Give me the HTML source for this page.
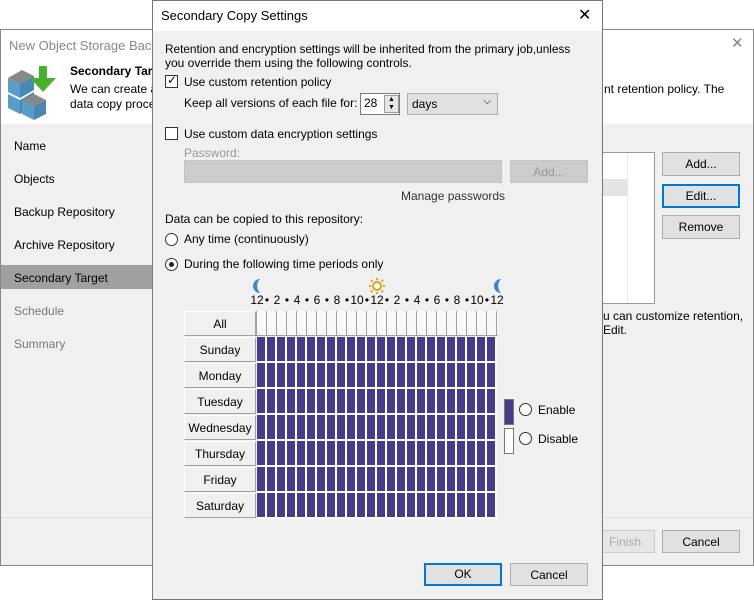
<!DOCTYPE html>
<html><head><meta charset="utf-8"><style>
*{box-sizing:border-box;margin:0;padding:0}
body{width:754px;height:600px;background:#fff;position:relative;overflow:hidden;font-family:"Liberation Sans",sans-serif;font-size:12px;color:#000}
.a{position:absolute;white-space:nowrap}
.btn{position:absolute;background:#e1e1e1;border:1px solid #adadad;text-align:center;line-height:22px}
.cb{position:absolute;width:13px;height:13px;border:1px solid #333;background:#fff}
.rb{position:absolute;width:13px;height:13px;border:1px solid #333;border-radius:50%;background:#fff}
.day{position:absolute;left:184px;width:72px;height:25px;background:#f0f0f0;border-right:1px solid #a0a0a0;border-bottom:1px solid #a0a0a0;border-top:1px solid #fff;border-left:1px solid #fff;text-align:center;line-height:24px}
.nav{position:absolute;left:14px}
.h{position:absolute;top:293px;width:20px;text-align:center;margin-left:-10px}
</style></head><body>
<div class="a" style="left:0;top:29px;width:754px;height:537px;border:1px solid #888;background:#f0f0f0"></div>
<div class="a" style="left:1px;top:30px;width:752px;height:94px;background:#fff"></div>
<div class="a" style="left:9px;top:38px;color:#888;font-size:13px">New Object Storage Backup</div>
<div class="a" style="left:731px;top:34px;color:#888;font-size:15px">✕</div>
<svg class="a" style="left:6px;top:64px" width="56" height="56" viewBox="0 0 56 56">
<polygon points="2,14 16,6 28,12 14,20" fill="#888"/><polygon points="2,14 14,20 14,34 2,28" fill="#5a9cc8"/><polygon points="14,20 28,12 28,26 14,34" fill="#4a88b4"/>
<polygon points="2,30 14,36 14,50 2,44" fill="#5a9cc8"/><polygon points="14,36 28,28 28,42 14,50" fill="#4a88b4"/>
<polygon points="16,36 28,30 40,36 28,42" fill="#888"/><polygon points="28,42 40,36 40,50 28,56" fill="#4a88b4"/><polygon points="16,36 28,42 28,56 16,50" fill="#5a9cc8"/>
<polygon points="33,2 41,2 41,14 50,14 37,28 24,14 33,14" fill="#4caf2c"/></svg>
<div class="a" style="left:70px;top:64px;font-weight:bold;font-size:12px">Secondary Target</div>
<div class="a" style="left:70px;top:82px">We can create a</div>
<div class="a" style="left:70px;top:97px">data copy proce</div>
<div class="a" style="left:604px;top:82px">nt retention policy. The</div>
<div class="a" style="left:1px;top:265px;width:152px;height:24px;background:#a0a0a0"></div>
<div class="nav a" style="top:139px">Name</div>
<div class="nav a" style="top:172px">Objects</div>
<div class="nav a" style="top:205px">Backup Repository</div>
<div class="nav a" style="top:238px">Archive Repository</div>
<div class="nav a" style="top:271px">Secondary Target</div>
<div class="nav a" style="top:304px;color:#777">Schedule</div>
<div class="nav a" style="top:337px;color:#777">Summary</div>
<div class="a" style="left:602px;top:152px;width:53px;height:152px;background:#fff;border:1px solid #999"></div>
<div class="a" style="left:603px;top:179px;width:24px;height:17px;background:#e4e4e4"></div>
<div class="a" style="left:627px;top:153px;width:1px;height:150px;background:#e8e8e8"></div>
<div class="btn" style="left:662px;top:152px;width:78px;height:24px">Add...</div>
<div class="btn" style="left:662px;top:184px;width:78px;height:24px;border:2px solid #0078d7;line-height:20px">Edit...</div>
<div class="btn" style="left:662px;top:215px;width:78px;height:24px">Remove</div>
<div class="a" style="left:603px;top:309px">u can customize retention,</div>
<div class="a" style="left:603px;top:323px">Edit.</div>
<div class="a" style="left:1px;top:517px;width:752px;height:1px;background:#ddd"></div>
<div class="btn" style="left:595px;top:530px;width:60px;height:23px;color:#aaa;background:#e6e6e6;border-color:#ccc">Finish</div>
<div class="btn" style="left:662px;top:530px;width:78px;height:23px">Cancel</div>

<div class="a" style="left:152px;top:0;width:451px;height:600px;border:1px solid #777;background:#f0f0f0"></div>
<div class="a" style="left:153px;top:1px;width:449px;height:30px;background:#fff"></div>
<div class="a" style="left:161px;top:8px;font-size:13px">Secondary Copy Settings</div>
<div class="a" style="left:578px;top:5px;font-size:16px">✕</div>
<div class="a" style="left:165px;top:42px;font-size:11.8px">Retention and encryption settings will be inherited from the primary job,unless</div>
<div class="a" style="left:165px;top:56px">you override them using the following controls.</div>
<div class="cb" style="left:165px;top:75px"></div><div class="a" style="left:167px;top:73px;font-size:12px">✓</div>
<div class="a" style="left:184px;top:75px">Use custom retention policy</div>
<div class="a" style="left:184px;top:96px">Keep all versions of each file for:</div>
<div class="a" style="left:360px;top:93px;width:40px;height:22px;background:#fff;border:1px solid #7a7a7a;padding:2px 3px">28</div>
<div class="a" style="left:384px;top:95px;width:15px;height:18px;background:#e6e6e6;border:1px solid #999;font-size:7px;line-height:8px;text-align:center">▲<br>▼</div>
<div class="a" style="left:407px;top:93px;width:91px;height:22px;background:#e1e1e1;border:1px solid #adadad;padding:3px 4px">days<span style="position:absolute;right:6px;top:2px;font-size:10px">⌵</span></div>
<div class="cb" style="left:165px;top:127px"></div>
<div class="a" style="left:184px;top:127px">Use custom data encryption settings</div>
<div class="a" style="left:184px;top:146px;color:#999">Password:</div>
<div class="a" style="left:184px;top:160px;width:318px;height:23px;background:#ccc;border:1px solid #c4c4c4"></div>
<div class="btn" style="left:510px;top:160px;width:78px;height:23px;background:#ccc;border-color:#c4c4c4;color:#999">Add...</div>
<div class="a" style="left:401px;top:189px;color:#333">Manage passwords</div>
<div class="a" style="left:165px;top:212px">Data can be copied to this repository:</div>
<div class="rb" style="left:165px;top:233px"></div>
<div class="a" style="left:184px;top:232px">Any time (continuously)</div>
<div class="rb" style="left:165px;top:258px"></div><div class="a" style="left:169px;top:262px;width:5px;height:5px;border-radius:50%;background:#222"></div>
<div class="a" style="left:184px;top:257px">During the following time periods only</div>
<svg class="a" style="left:250px;top:278px" width="14" height="16"><path d="M10 1 A7 7 0 1 0 10 15 A10 10 0 0 1 10 1Z" fill="#3f87cc"/></svg>
<svg class="a" style="left:491px;top:278px" width="14" height="16"><path d="M10 1 A7 7 0 1 0 10 15 A10 10 0 0 1 10 1Z" fill="#3f87cc"/></svg>
<svg class="a" style="left:369px;top:278px" width="16" height="16"><circle cx="8" cy="8" r="4" fill="#fff" stroke="#e8a020" stroke-width="2"/><g stroke="#e8a020" stroke-width="2"><line x1="8" y1="0" x2="8" y2="2"/><line x1="8" y1="14" x2="8" y2="16"/><line x1="0" y1="8" x2="2" y2="8"/><line x1="14" y1="8" x2="16" y2="8"/><line x1="2" y1="2" x2="3.5" y2="3.5"/><line x1="14" y1="2" x2="12.5" y2="3.5"/><line x1="2" y1="14" x2="3.5" y2="12.5"/><line x1="14" y1="14" x2="12.5" y2="12.5"/></g></svg>
<div class="h" style="left:257px">12</div><div class="h" style="left:267px">•</div>
<div class="h" style="left:277px">2</div><div class="h" style="left:287px">•</div>
<div class="h" style="left:297px">4</div><div class="h" style="left:307px">•</div>
<div class="h" style="left:317px">6</div><div class="h" style="left:327px">•</div>
<div class="h" style="left:337px">8</div><div class="h" style="left:347px">•</div>
<div class="h" style="left:357px">10</div><div class="h" style="left:367px">•</div>
<div class="h" style="left:377px">12</div><div class="h" style="left:387px">•</div>
<div class="h" style="left:397px">2</div><div class="h" style="left:407px">•</div>
<div class="h" style="left:417px">4</div><div class="h" style="left:427px">•</div>
<div class="h" style="left:437px">6</div><div class="h" style="left:447px">•</div>
<div class="h" style="left:457px">8</div><div class="h" style="left:467px">•</div>
<div class="h" style="left:477px">10</div><div class="h" style="left:487px">•</div>
<div class="h" style="left:497px">12</div>
<div class="day" style="top:311px">All</div>
<div class="day" style="top:337px">Sunday</div>
<div class="day" style="top:363px">Monday</div>
<div class="day" style="top:389px">Tuesday</div>
<div class="day" style="top:415px">Wednesday</div>
<div class="day" style="top:441px">Thursday</div>
<div class="day" style="top:467px">Friday</div>
<div class="day" style="top:493px">Saturday</div>
<div class="a" style="left:256px;top:311px;width:242px;height:25px;background:repeating-linear-gradient(90deg,#a0a0a0 0 1px,#f8f8f8 1px 10px);border-bottom:1px solid #a0a0a0"></div>
<div class="a" style="left:257px;top:337px;width:240px;height:182px;background:repeating-linear-gradient(180deg,transparent 0 24px,#fff 24px 26px),repeating-linear-gradient(90deg,#463c8a 0 8px,#fff 8px 10px)"></div>
<div class="a" style="left:504px;top:399px;width:10px;height:26px;background:#463c8a;border:1px solid #777"></div>
<div class="a" style="left:504px;top:428px;width:10px;height:26px;background:#fff;border:1px solid #777"></div>
<div class="rb" style="left:519px;top:403px"></div><div class="a" style="left:538px;top:403px">Enable</div>
<div class="rb" style="left:519px;top:432px"></div><div class="a" style="left:538px;top:432px">Disable</div>
<div class="btn" style="left:424px;top:563px;width:78px;height:23px;border:2px solid #0078d7;line-height:19px">OK</div>
<div class="btn" style="left:510px;top:563px;width:78px;height:23px">Cancel</div>
</body></html>
